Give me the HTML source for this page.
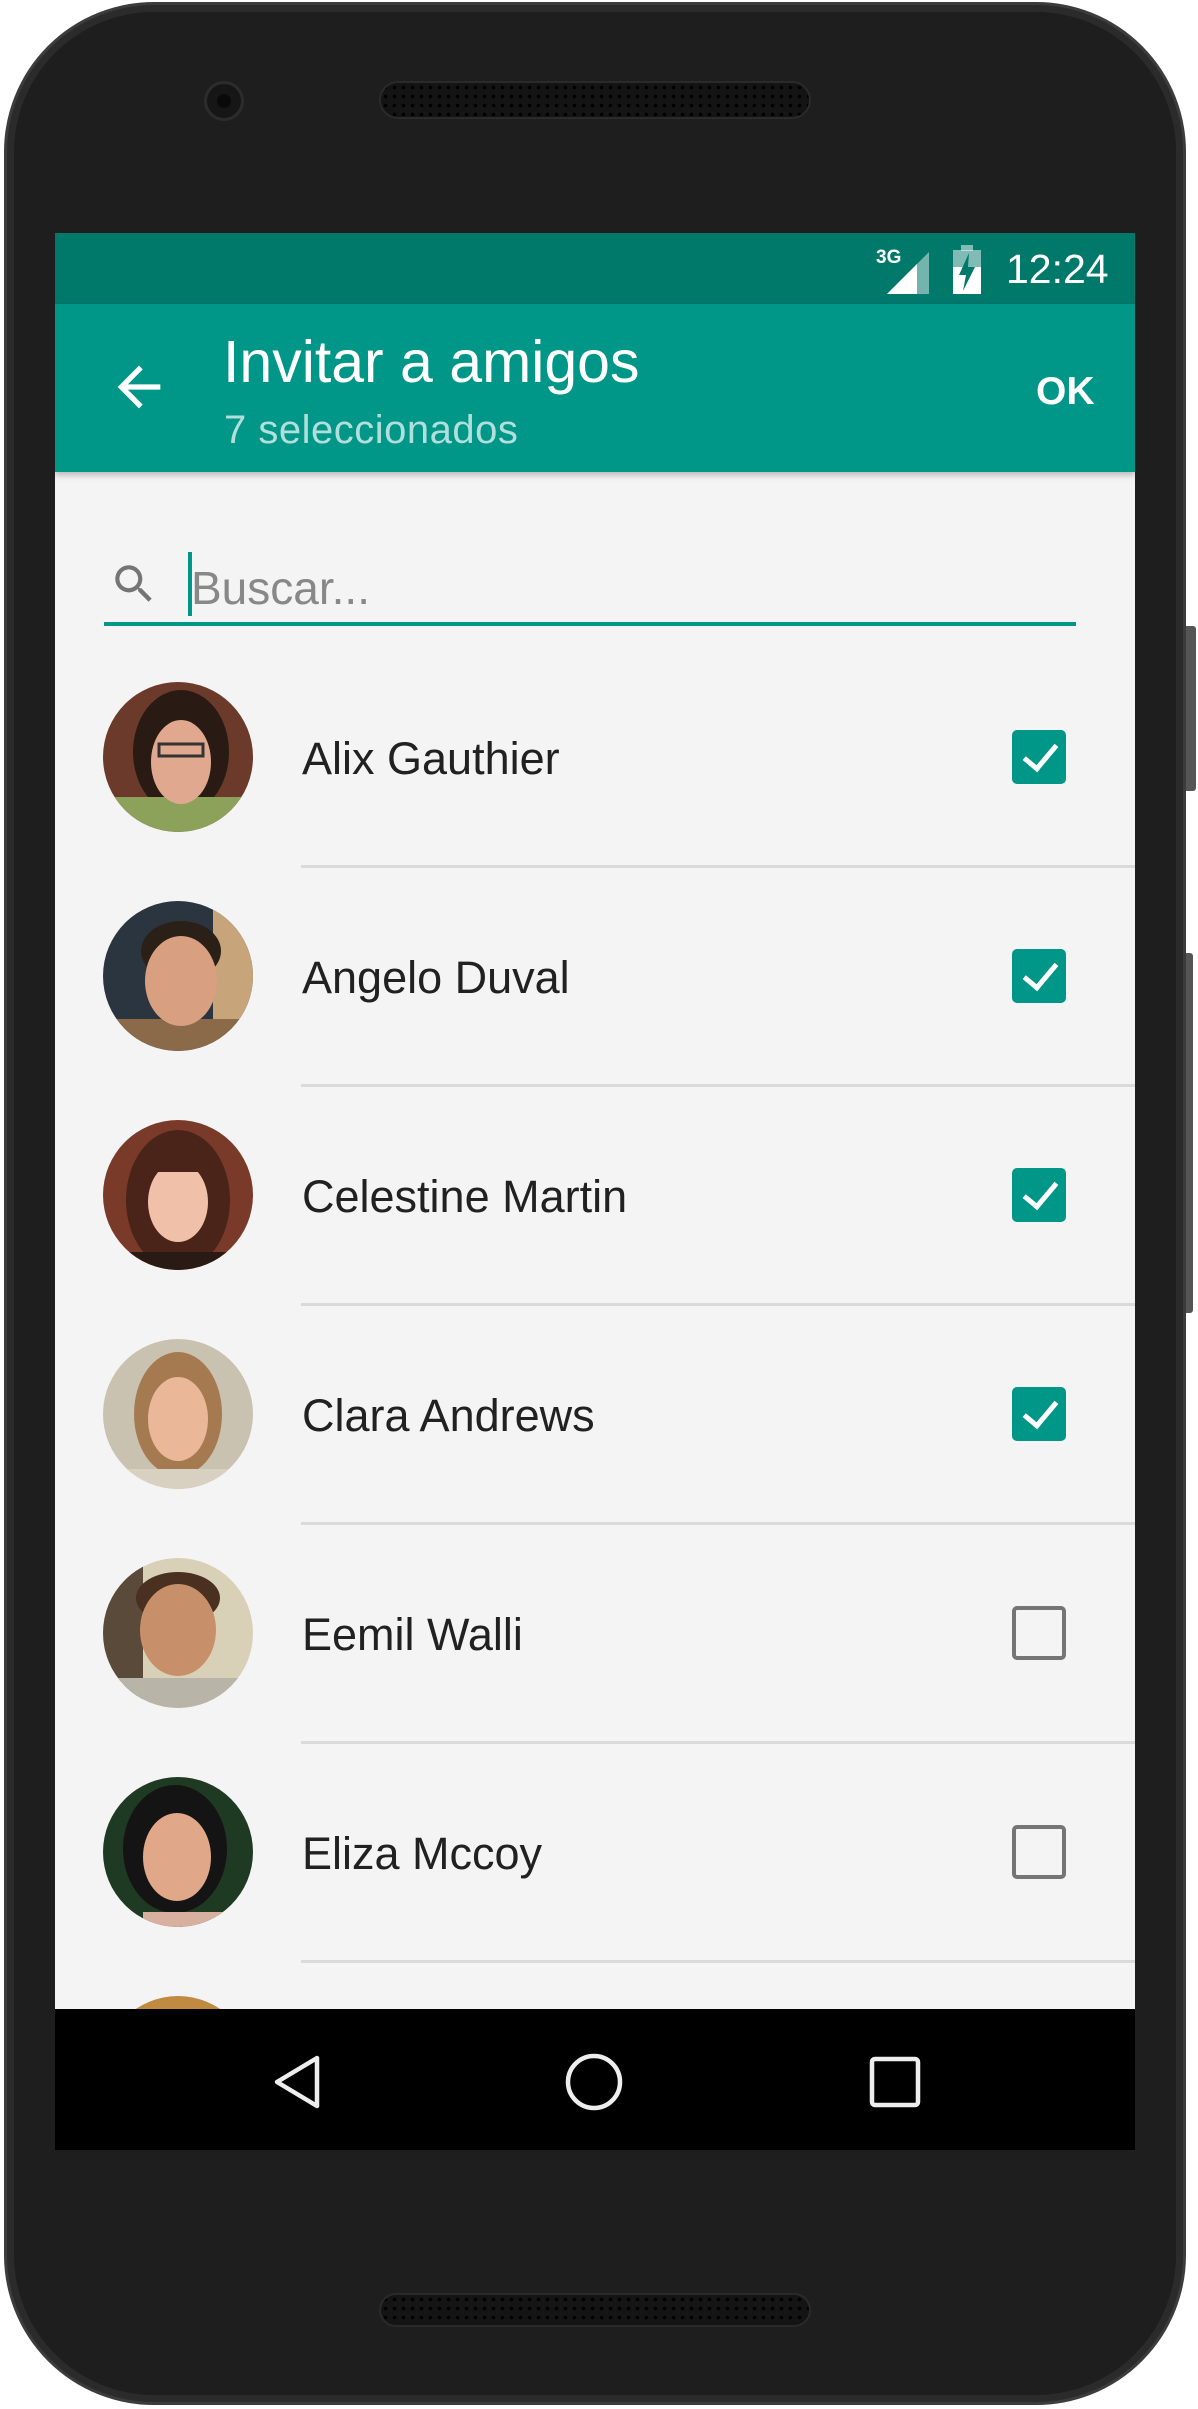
<!DOCTYPE html>
<html><head><meta charset="utf-8"><style>
*{margin:0;padding:0;box-sizing:border-box}
html,body{width:1198px;height:2409px;background:#fff;overflow:hidden;font-family:"Liberation Sans",sans-serif}
.abs{position:absolute}
.body{left:4px;top:2px;width:1182px;height:2403px;border-radius:150px;background:#2b2b2b;border:3px solid #3c3c3c}
.inner{left:14px;top:12px;width:1162px;height:2383px;border-radius:140px;background:#1e1e1e}
.btn{background:#555;width:10px;border-radius:0 3px 3px 0}
.spk{border-radius:20px;background:#141414;border:2px solid #2a2a2a;
background-image:radial-gradient(circle,#000 1.6px,transparent 2px);background-size:9px 9px}
.screen{left:55px;top:233px;width:1080px;height:1917px;background:#f4f4f4;overflow:hidden}
.status{left:0;top:0;width:1080px;height:71px;background:#00796b}
.bar{left:0;top:71px;width:1080px;height:168px;background:#009688;box-shadow:0 3px 6px rgba(0,0,0,.25)}
.t{color:#fff;white-space:nowrap}
.name{left:247px;font-size:45px;color:#212121;white-space:nowrap}
.div{left:246px;width:834px;height:3px;background:#dadada}
.cb{left:957px;width:54px;height:54px;border-radius:5px}
.on{background:#009688}
.on::after{content:"";position:absolute;left:19px;top:7px;width:14px;height:28px;border:solid #fff;border-width:0 5px 5px 0;transform:rotate(40deg)}
.off{border:4px solid #757575}
.av{left:48px;width:150px;height:150px;border-radius:50%;overflow:hidden}
.nav{left:0;top:1776px;width:1080px;height:141px;background:#000}
</style></head><body>
<div class="abs btn" style="left:1186px;top:626px;height:165px"></div>
<div class="abs btn" style="left:1186px;top:953px;height:360px;width:7px"></div>
<div class="abs body"></div>
<div class="abs inner"></div>
<div class="abs spk" style="left:379px;top:81px;width:432px;height:38px"></div>
<div class="abs" style="left:204px;top:81px;width:40px;height:40px;border-radius:50%;background:#161616;border:3px solid #2c2c2c"><div class="abs" style="left:10px;top:10px;width:14px;height:14px;border-radius:50%;background:#0a0a0a"></div></div>
<div class="abs spk" style="left:379px;top:2293px;width:432px;height:34px"></div>

<div class="abs screen">
 <div class="abs status">
  <div class="abs t" style="left:821px;top:14px;font-size:19px;font-weight:bold">3G</div>
  <svg class="abs" style="left:832px;top:17px" width="44" height="46"><polygon points="42,2 42,44 0,44" fill="#fff" opacity=".45"/><polygon points="30,14 30,44 0,44" fill="#fff"/></svg>
  <svg class="abs" style="left:898px;top:12px" width="30" height="50"><rect x="8" y="0" width="12" height="6" fill="#fff" opacity=".5"/><rect x="0" y="5" width="28" height="44" fill="#fff" opacity=".5"/><rect x="0" y="22" width="28" height="27" fill="#fff"/><polygon points="16,8 6,30 13,30 10,46 22,22 15,22" fill="#00796b"/></svg>
  <div class="abs t" style="left:951px;top:13px;font-size:41px">12:24</div>
 </div>
 <div class="abs bar">
  <svg class="abs" style="left:52px;top:51px" width="64" height="64" viewBox="0 0 24 24"><path d="M20 11H7.83l5.59-5.59L12 4l-8 8 8 8 1.41-1.41L7.83 13H20v-2z" fill="#fff"/></svg>
  <div class="abs t" style="left:168px;top:24px;font-size:59px">Invitar a amigos</div>
  <div class="abs t" style="left:169px;top:104px;font-size:40px;color:#b2dfdb;letter-spacing:0.5px">7 seleccionados</div>
  <div class="abs t" style="left:981px;top:66px;font-size:39px;font-weight:bold">OK</div>
 </div>
 <svg class="abs" style="left:54px;top:326px" width="50" height="50" viewBox="0 0 24 24"><path d="M15.5 14h-.79l-.28-.27A6.47 6.47 0 0 0 16 9.5 6.5 6.5 0 1 0 9.5 16c1.61 0 3.09-.59 4.23-1.57l.27.28v.79l5 4.99L20.49 19l-4.99-5zm-6 0C7.01 14 5 11.99 5 9.5S7.01 5 9.5 5 14 7.01 14 9.5 11.99 14 9.5 14z" fill="#757575"/></svg>
 <div class="abs" style="left:133px;top:319px;width:4px;height:64px;background:#009688"></div>
 <div class="abs" style="left:136px;top:328px;font-size:46px;color:#888">Buscar...</div>
 <div class="abs" style="left:49px;top:389px;width:972px;height:4px;background:#009688"></div>

 <div class="abs av" style="top:449px"><svg width="150" height="150"><rect width="150" height="150" fill="#6b3a2a"/><ellipse cx="78" cy="70" rx="48" ry="62" fill="#2a1a14"/><rect y="115" width="150" height="40" fill="#8ca25a"/><ellipse cx="78" cy="80" rx="30" ry="42" fill="#e0a98f"/><rect x="56" y="62" width="44" height="12" fill="none" stroke="#333" stroke-width="3"/></svg></div>
 <div class="abs name" style="top:500px">Alix Gauthier</div>
 <div class="abs cb on" style="top:497px"></div>
 <div class="abs div" style="top:632px"></div>

 <div class="abs av" style="top:668px"><svg width="150" height="150"><rect width="150" height="150" fill="#2a3540"/><rect x="110" width="40" height="150" fill="#c8a47a"/><ellipse cx="78" cy="50" rx="40" ry="30" fill="#2a2018"/><rect y="118" width="150" height="40" fill="#8a6a48"/><ellipse cx="78" cy="80" rx="36" ry="45" fill="#d8a080"/></svg></div>
 <div class="abs name" style="top:719px">Angelo Duval</div>
 <div class="abs cb on" style="top:716px"></div>
 <div class="abs div" style="top:851px"></div>

 <div class="abs av" style="top:887px"><svg width="150" height="150"><rect width="150" height="150" fill="#7a3a2a"/><ellipse cx="75" cy="80" rx="52" ry="70" fill="#4a2418"/><ellipse cx="75" cy="82" rx="30" ry="40" fill="#f0c0a8"/><rect x="45" y="30" width="60" height="22" fill="#4a2418"/><rect y="132" width="150" height="20" fill="#2a1a14"/></svg></div>
 <div class="abs name" style="top:938px">Celestine Martin</div>
 <div class="abs cb on" style="top:935px"></div>
 <div class="abs div" style="top:1070px"></div>

 <div class="abs av" style="top:1106px"><svg width="150" height="150"><rect width="150" height="150" fill="#c9c2b0"/><ellipse cx="75" cy="75" rx="44" ry="62" fill="#a67a50"/><ellipse cx="75" cy="80" rx="30" ry="42" fill="#eab898"/><rect y="130" width="150" height="20" fill="#d8d0c0"/></svg></div>
 <div class="abs name" style="top:1157px">Clara Andrews</div>
 <div class="abs cb on" style="top:1154px"></div>
 <div class="abs div" style="top:1289px"></div>

 <div class="abs av" style="top:1325px"><svg width="150" height="150"><rect width="150" height="150" fill="#d9d0b8"/><rect width="40" height="150" fill="#5a4a3a"/><ellipse cx="75" cy="40" rx="42" ry="26" fill="#4a3020"/><rect y="120" width="150" height="30" fill="#b8b4a8"/><ellipse cx="75" cy="72" rx="38" ry="46" fill="#c8906a"/></svg></div>
 <div class="abs name" style="top:1376px">Eemil Walli</div>
 <div class="abs cb off" style="top:1373px"></div>
 <div class="abs div" style="top:1508px"></div>

 <div class="abs av" style="top:1544px"><svg width="150" height="150"><rect width="150" height="150" fill="#1f3a22"/><ellipse cx="72" cy="72" rx="52" ry="64" fill="#141414"/><ellipse cx="74" cy="80" rx="34" ry="44" fill="#e0a888"/><rect x="40" y="135" width="80" height="20" fill="#d8b0a0"/></svg></div>
 <div class="abs name" style="top:1595px">Eliza Mccoy</div>
 <div class="abs cb off" style="top:1592px"></div>
 <div class="abs div" style="top:1727px"></div>

 <div class="abs av" style="top:1763px"><svg width="150" height="150"><rect width="150" height="150" fill="#c08a40"/></svg></div>

 <div class="abs nav">
  <svg class="abs" style="left:214px;top:43px" width="60" height="60"><path d="M48 6 L48 54 L8 30 Z" fill="none" stroke="#eee" stroke-width="4.5" stroke-linejoin="round"/></svg>
  <svg class="abs" style="left:509px;top:43px" width="60" height="60"><circle cx="30" cy="30" r="26" fill="none" stroke="#eee" stroke-width="4.5"/></svg>
  <svg class="abs" style="left:810px;top:43px" width="60" height="60"><rect x="7" y="7" width="46" height="46" rx="3" fill="none" stroke="#eee" stroke-width="4.5"/></svg>
 </div>
</div>
</body></html>
